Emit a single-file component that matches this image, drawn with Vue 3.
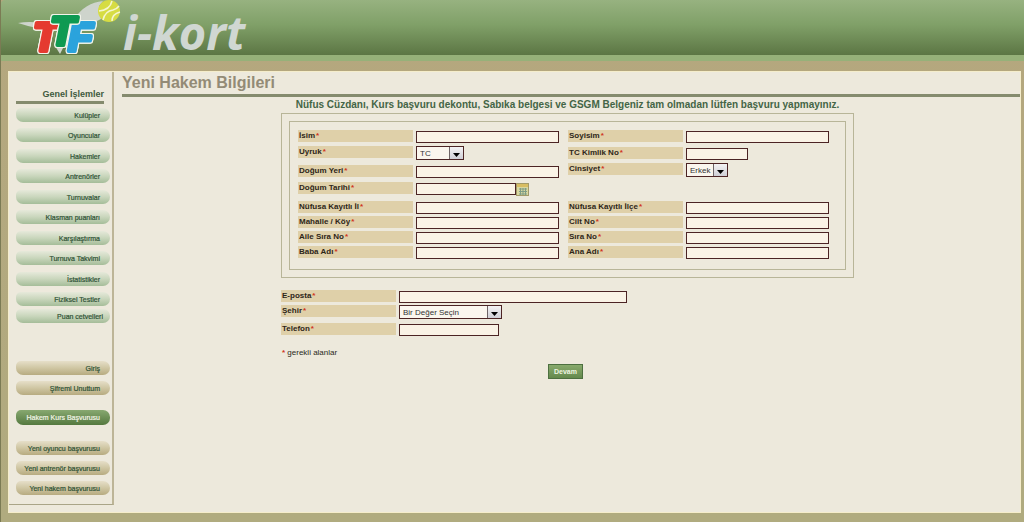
<script setup>
import { reactive } from 'vue'

const mainLinks = [
  'Kulüpler', 'Oyuncular', 'Hakemler', 'Antrenörler', 'Turnuvalar',
  'Klasman puanları', 'Karşılaştırma', 'Turnuva Takvimi', 'İstatistikler', 'Fiziksel Testler',
]
const accountLinks = ['Giriş', 'Şifremi Unuttum']
const applyLinks = ['Yeni oyuncu başvurusu', 'Yeni antrenör başvurusu', 'Yeni hakem başvurusu']

const columns = [
  [
    { id: 'isim', label: 'İsim', row: 'r16' },
    { id: 'uyruk', label: 'Uyruk', row: 'r19', options: ['TC', 'Diğer'], size: 'w48' },
    { id: 'dogumYeri', label: 'Doğum Yeri', row: 'r17' },
    { id: 'dogumTarihi', label: 'Doğum Tarihi', row: 'r19', date: true, size: 'w100' },
    { id: 'il', label: 'Nüfusa Kayıtlı İl', row: 'r15' },
    { id: 'mahalle', label: 'Mahalle / Köy', row: 'r15' },
    { id: 'aileSira', label: 'Aile Sıra No', row: 'r15' },
    { id: 'babaAdi', label: 'Baba Adı', row: 'r15' },
  ],
  [
    { id: 'soyisim', label: 'Soyisim', row: 'r17' },
    { id: 'tcNo', label: 'TC Kimlik No', row: 'r16', size: 'w62' },
    { id: 'cinsiyet', label: 'Cinsiyet', row: 'r38', options: ['Erkek', 'Kadın'], size: 'w42' },
    { id: 'ilce', label: 'Nüfusa Kayıtlı İlçe', row: 'r15' },
    { id: 'cilt', label: 'Cilt No', row: 'r15' },
    { id: 'sira', label: 'Sıra No', row: 'r15' },
    { id: 'anaAdi', label: 'Ana Adı', row: 'r15' },
  ],
]
const contact = [
  { id: 'eposta', label: 'E-posta', row: 'r15', size: 'w228' },
  { id: 'sehir', label: 'Şehir', row: 'r18', options: ['Bir Değer Seçin'], size: 'w103' },
  { id: 'telefon', label: 'Telefon', row: 'r15', size: 'w100' },
]

const form = reactive({ uyruk: 'TC', cinsiyet: 'Erkek', sehir: 'Bir Değer Seçin' })
</script>

<template>
  <div class="page">
    <header class="banner">
      <svg class="logo" width="106" height="56" viewBox="0 0 106 56" aria-label="TTF">
        <path class="swoosh" d="M1 23 Q12 21 24 23 L20 28 Q10 26 1 23Z" />
        <path class="swoosh" d="M38 46 L43 54 L50 40 L80 21 L84 19 L82 6 L86 1 Q68 3 58 18Z" />
        <text class="mark red" x="16" y="51">T</text>
        <text class="mark blue" x="51" y="51">F</text>
        <text class="mark green" x="33" y="45">T</text>
        <circle cx="92" cy="11" r="11" class="ball" />
        <path class="seam" d="M82 11 Q93 10 95 1 M86 20 Q88 11 96 10 Q100 9 102 6 M95 21 Q95 14 103 12" />
      </svg>
      <span class="brand">i-kort</span>
    </header>

    <div class="panel">
      <nav class="side">
        <h2>Genel İşlemler</h2>
        <div class="main-links">
          <a v-for="l in mainLinks" :key="l" href="#" class="pill">{{ l }}</a>
        </div>
        <a href="#" class="pill wide">Puan cetvelleri</a>
        <div class="group account">
          <a v-for="l in accountLinks" :key="l" href="#" class="pill tan">{{ l }}</a>
        </div>
        <a href="#" class="pill current">Hakem Kurs Başvurusu</a>
        <div class="group apply">
          <a v-for="l in applyLinks" :key="l" href="#" class="pill tan">{{ l }}</a>
        </div>
      </nav>

      <main>
        <h1>Yeni Hakem Bilgileri</h1>
        <form @submit.prevent>
          <p class="notice">Nüfus Cüzdanı, Kurs başvuru dekontu, Sabıka belgesi ve GSGM Belgeniz tam olmadan lütfen başvuru yapmayınız.</p>
          <div class="outer">
            <div class="inner">
              <div v-for="(col, i) in columns" :key="i" class="col">
                <div v-for="f in col" :key="f.id" class="row" :class="f.row">
                  <label :for="f.id">{{ f.label }}<i>*</i></label>
                  <span v-if="f.options" class="pick" :class="f.size">
                    <select :id="f.id" v-model="form[f.id]">
                      <option v-for="o in f.options" :key="o">{{ o }}</option>
                    </select>
                    <svg class="arrow" viewBox="0 0 13 12"><path d="M3 6 H10 L6.5 10Z" /></svg>
                  </span>
                  <input v-else :id="f.id" v-model="form[f.id]" type="text" :class="f.size">
                  <button v-if="f.date" type="button" class="cal" aria-label="Takvim">
                    <svg width="13" height="13" viewBox="0 0 13 13">
                      <rect x="0.5" y="0.5" width="12" height="12" fill="#d9d7a0" stroke="#a39a68" />
                      <rect x="1" y="1" width="11" height="3" fill="#d8bd62" />
                      <path d="M3 6H11M3 8.5H11M3 11H11M4.5 5V12M7 5V12M9.5 5V12" stroke="#7f9d86" />
                    </svg>
                  </button>
                </div>
              </div>
            </div>
          </div>

          <div class="contact">
            <div v-for="f in contact" :key="f.id" class="row" :class="f.row">
              <label :for="f.id">{{ f.label }}<i>*</i></label>
              <span v-if="f.options" class="pick" :class="f.size">
                <select :id="f.id" v-model="form[f.id]">
                  <option v-for="o in f.options" :key="o">{{ o }}</option>
                </select>
                <svg class="arrow" viewBox="0 0 13 12"><path d="M3 6 H10 L6.5 10Z" /></svg>
              </span>
              <input v-else :id="f.id" v-model="form[f.id]" type="text" :class="f.size">
            </div>
          </div>

          <p class="required"><i>*</i> gerekli alanlar</p>
          <button type="submit" class="submit">Devam</button>
        </form>
      </main>
    </div>
  </div>
</template>

<style>
body { background: #b3ab80; }
</style>

<style scoped>
* { box-sizing: border-box; }
.page {
  min-height: 100vh;
  display: flex;
  flex-direction: column;
  padding-bottom: 9px;
  border-left: 1px solid #7b7b54;
  background: linear-gradient(#b5a77e, #b0ab7f);
  font-family: "Liberation Sans", Arial, sans-serif;
}
.banner {
  display: flex;
  height: 61px;
  flex: none;
  padding-left: 16px;
  border-bottom: 6px solid #96b179;
  border-top-left-radius: 4px;
  background: linear-gradient(#97b280, #80a068 45%, #5c7644);
}
.logo { flex: none; overflow: visible; }
.mark {
  font: italic bold 41px "Liberation Sans", Arial, sans-serif;
  stroke-width: 4px;
  stroke-linejoin: round;
  filter: drop-shadow(1px 0 #f2f4ea) drop-shadow(-1px 0 #f2f4ea) drop-shadow(0 1px #f2f4ea) drop-shadow(0 -1px #f2f4ea);
}
.red { fill: #e53a30; stroke: #e53a30; }
.green { fill: #0e9a52; stroke: #0e9a52; }
.blue { fill: #2ba3dc; stroke: #2ba3dc; }
.swoosh { fill: #ced4cc; }
.ball { fill: #d6dc43; }
.seam { fill: none; stroke: #f4f6cf; stroke-width: 1.5; }
.brand {
  font: italic 700 47px/65px "Open Sans", sans-serif;
  color: #d0d7d2;
}
.panel {
  flex: 1;
  display: flex;
  align-items: flex-start;
  margin: 10px 3px 0 7px;
  border: 1px solid #f5edcb;
  background: #ede9dc;
}
.side {
  flex: none;
  width: 105px;
  padding: 17px 2px 9px 7px;
  border-right: 2px solid #bdb597;
  border-bottom: 1px solid #aaa588;
}
h2 {
  margin: 0 6px 4px 0;
  padding-bottom: 1px;
  border-bottom: 3px solid #858b6e;
  font-size: 9px;
  line-height: 11px;
  text-align: right;
  color: #405a40;
}
.main-links {
  display: flex;
  flex-direction: column;
  justify-content: space-between;
  height: 198px;
}
.pill {
  display: block;
  height: 14px;
  padding-right: 10px;
  border-radius: 5px 7px 7px 7px;
  background: linear-gradient(#e6e9da, #c9d6bc 50%, #a5bd99);
  font-size: 7px;
  line-height: 15px;
  text-align: right;
  white-space: nowrap;
  text-decoration: none;
  color: #2f5236;
  -webkit-text-stroke: 0.2px currentColor;
}
.wide { margin-top: 3px; padding-right: 7px; }
.tan {
  background: linear-gradient(#e6dfc9, #cfc6a3 50%, #b7ab80);
}
.current {
  height: 15px;
  background: linear-gradient(#87a870, #55793f);
  color: #f2f5e6;
}
.group { display: grid; gap: 6px; }
.account { margin: 38px 0 15px; }
.apply { margin-top: 16px; }
main { flex: 1; min-width: 0; padding-left: 8px; }
h1 {
  margin: 0;
  height: 25px;
  border-bottom: 3px solid #858b6e;
  font-size: 16px;
  line-height: 22px;
  color: #938b76;
}
.notice {
  margin: 3px 0;
  font-size: 10px;
  line-height: 10px;
  font-weight: bold;
  text-align: center;
  color: #446546;
}
form { width: 573px; margin-left: 159px; }
.outer { padding: 7px; border: 1px solid #b8b598; }
.inner {
  display: flex;
  gap: 9px;
  padding: 8px;
  border: 1px solid #b8b598;
}
.col { width: 261px; }
.row {
  display: flex;
  align-items: flex-start;
}
.r15 { height: 15px; }
.r16 { height: 16px; }
.r17 { height: 17px; }
.r18 { height: 18px; }
.r19 { height: 19px; }
.r38 { height: 38px; }
label {
  flex: none;
  width: 115px;
  height: 12px;
  margin-right: 3px;
  padding-left: 1px;
  background: #dfd0a9;
  font-size: 8px;
  line-height: 12px;
  font-weight: bold;
  white-space: nowrap;
  color: #2e2618;
}
i { margin-left: 1px; font-style: normal; font-weight: bold; color: #d0341c; }
input {
  width: 143px;
  height: 12px;
  margin: 1px 0 0;
  padding: 0 3px;
  border: 1px solid #4c2424;
  border-radius: 0;
  background: #faf3e6;
  font: 8px "Liberation Sans", Arial, sans-serif;
}
.pick { position: relative; flex: none; }
.pick select {
  display: block;
  width: 100%;
  height: 14px;
  padding: 0 0 0 3px;
  border: 1px solid #4c2424;
  border-radius: 0;
  appearance: none;
  background: #faf6ee;
  font: 8px "Liberation Sans", Arial, sans-serif;
  color: #333;
}
.arrow {
  position: absolute;
  top: 1px;
  right: 1px;
  width: 14px;
  height: 12px;
  border-left: 1px solid #6e6466;
  background: linear-gradient(#f4f3f4, #cfcfd6);
  pointer-events: none;
}
.w42 { width: 42px; }
.w48 { width: 48px; }
.w62 { width: 62px; }
.w100 { width: 100px; }
.w103 { width: 103px; }
.w228 { width: 228px; }
.cal { padding: 0; border: 0; background: none; line-height: 0; margin-top: 1px; }
.contact { margin-top: 12px; }
.required {
  margin: 10px 0 6px;
  font-size: 8px;
  line-height: 10px;
  color: #2a2a22;
}
.submit {
  display: block;
  width: 35px;
  height: 15px;
  margin-left: 267px;
  padding: 0;
  border: 1px solid #4d7040;
  background: linear-gradient(#88aa6c, #64894d);
  font: bold 7px "Liberation Sans", Arial, sans-serif;
  color: #eef4e0;
}
</style>
